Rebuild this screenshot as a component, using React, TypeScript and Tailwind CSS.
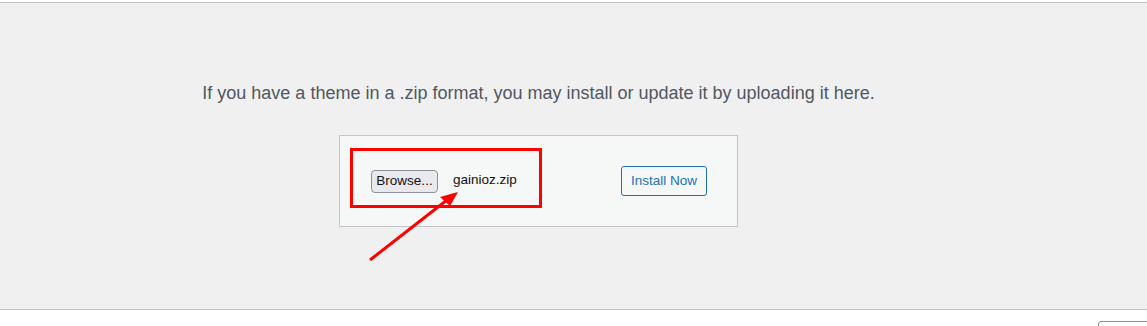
export default function App() {
  return (
    <div
      className="relative w-[1147px] h-[326px] bg-white overflow-hidden"
      style={{ fontFamily: '"Liberation Sans", Arial, sans-serif' }}
    >
      <div className="h-[2px]" />
      <div className="h-[308px] border-y border-[#c3c4c7] bg-[#f0f0f1]">
        <div className="w-[1077px] flex flex-col items-center pt-[78px]">
          <p className="text-[18px] leading-[24px] text-[#50575e]">
            If you have a theme in a .zip format, you may install or update it by uploading it here.
          </p>
          <div className="mt-[30px] w-[399px] h-[92px] border border-[#c3c4c7] bg-[#f6f7f7] flex items-center justify-between pl-[31px] pr-[30px]">
            <div className="flex items-center">
              <button className="w-[67px] h-[23px] rounded-[4px] border border-[#8f8f9d] bg-[#e9e9ed] text-[13.5px] leading-[20px] text-[#111] flex items-center justify-center">
                Browse...
              </button>
              <span className="ml-[15px] text-[13.5px] leading-[18px] text-[#111] mt-[-2px]">gainioz.zip</span>
            </div>
            <button className="w-[86px] h-[30px] rounded-[3px] border border-[#2271b1] bg-[#f6f7f7] text-[13.5px] leading-[18px] text-[#2271b1] flex items-center justify-center">
              Install Now
            </button>
          </div>
        </div>
      </div>
      <div className="absolute left-[1098px] top-[321px] w-[60px] h-[20px] rounded-[3px] border border-[#8c8f94] bg-white" />
      <svg className="absolute left-0 top-0 pointer-events-none" width="1147" height="326">
        <rect x="351.5" y="149.5" width="189" height="57" fill="none" stroke="#ff0000" strokeWidth="3" />
        <line x1="370" y1="260" x2="447" y2="200" stroke="#ff0000" strokeWidth="3" />
        <polygon points="458,192 440,197 450,206" fill="#ff0000" />
      </svg>
    </div>
  );
}
